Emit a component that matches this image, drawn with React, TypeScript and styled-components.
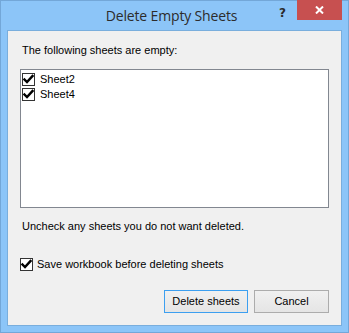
import React from "react";
import styled, { createGlobalStyle } from "styled-components";

const Global = createGlobalStyle`
  html, body { margin: 0; padding: 0; background: #8cc5f8; }
  * { box-sizing: border-box; }
`;

const Window = styled.div`
  width: 349px;
  height: 333px;
  background: #8cc5f8;
  border: 1px solid #73a7d8;
  display: flex;
  flex-direction: column;
  font-family: "Liberation Sans", Arial, sans-serif;
  font-size: 11px;
  color: #000;
`;

const TitleBar = styled.div`
  height: 29px;
  display: grid;
  grid-template-columns: 1fr auto 1fr;
  padding-right: 6px;
`;

const Title = styled.div`
  grid-column: 2;
  font-family: "Open Sans", "Noto Sans", sans-serif;
  font-size: 14px;
  letter-spacing: -0.15px;
  line-height: 29px;
  color: #2c2c2c;
  white-space: nowrap;
`;

const Caption = styled.div`
  grid-column: 3;
  display: flex;
  justify-content: flex-end;
  align-items: flex-start;
`;

const HelpButton = styled.div`
  width: 26px;
  height: 20px;
  display: flex;
  justify-content: center;
  align-items: center;
  font-family: "DejaVu Sans", sans-serif;
  font-weight: bold;
  font-size: 12px;
  color: #2b2b2b;
  padding-top: 3px;
  padding-right: 3px;
`;

const CloseButton = styled.div`
  width: 45px;
  height: 20px;
  margin-top: -1px;
  background: #c75050;
  display: flex;
  justify-content: center;
  align-items: center;
`;

const Client = styled.div`
  flex: 1;
  margin: 0 6px 6px 6px;
  border: 1px solid #79aedd;
  background: #f0f0f0;
  padding: 13px 12px 12px 12px;
  display: flex;
  flex-direction: column;
`;

const Label = styled.div<{ $mt?: number }>`
  margin-left: 2px;
  margin-top: ${(p) => p.$mt ?? 0}px;
  height: 13px;
  line-height: 13px;
  white-space: nowrap;
`;

const ListBox = styled.div`
  margin-top: 12px;
  height: 139px;
  background: #fff;
  border: 1px solid #828790;
  padding: 3px 1px;
  display: flex;
  flex-direction: column;
`;

const Row = styled.div<{ $h?: number }>`
  height: ${(p) => p.$h ?? 15}px;
  display: flex;
  align-items: flex-start;
  gap: 5px;
  line-height: 13px;
  white-space: nowrap;
`;

const Box = styled.span`
  width: 13px;
  height: 13px;
  flex: none;
  border: 1px solid #333;
  background: #fff;
  display: flex;
  align-items: center;
  justify-content: center;
`;

const SaveRow = styled(Row)`
  margin-top: 25px;
  gap: 4px;
`;

const Buttons = styled.div`
  margin-top: auto;
  display: flex;
  justify-content: flex-end;
  gap: 6px;
`;

const Button = styled.div<{ $w: number; $default?: boolean }>`
  width: ${(p) => p.$w}px;
  height: 23px;
  border: 1px solid ${(p) => (p.$default ? "#3c9ff0" : "#acacac")};
  background: linear-gradient(#f0f0f0, #e5e5e5);
  display: flex;
  align-items: center;
  justify-content: center;
  line-height: 13px;
`;

const Check = () => (
  <svg width="11" height="11" viewBox="0 0 11 11">
    <path d="M1.5 5.5 L4 8 L9.5 2" fill="none" stroke="#000" strokeWidth="2.4" strokeLinecap="square" />
  </svg>
);

const CheckBox = () => (
  <Box>
    <Check />
  </Box>
);

export default function App() {
  return (
    <>
      <Global />
      <Window>
        <TitleBar>
          <Title>Delete Empty Sheets</Title>
          <Caption>
            <HelpButton>?</HelpButton>
            <CloseButton>
              <svg width="9" height="8" viewBox="0 0 9 8">
                <path d="M1 0.5 L8 7.5 M8 0.5 L1 7.5" stroke="#fff" strokeWidth="2" />
              </svg>
            </CloseButton>
          </Caption>
        </TitleBar>
        <Client>
          <Label>The following sheets are empty:</Label>
          <ListBox>
            <Row>
              <CheckBox />
              <span>Sheet2</span>
            </Row>
            <Row>
              <CheckBox />
              <span>Sheet4</span>
            </Row>
          </ListBox>
          <Label $mt={12}>Uncheck any sheets you do not want deleted.</Label>
          <SaveRow $h={13}>
            <CheckBox />
            <span>Save workbook before deleting sheets</span>
          </SaveRow>
          <Buttons>
            <Button $w={84} $default>Delete sheets</Button>
            <Button $w={75}>Cancel</Button>
          </Buttons>
        </Client>
      </Window>
    </>
  );
}
